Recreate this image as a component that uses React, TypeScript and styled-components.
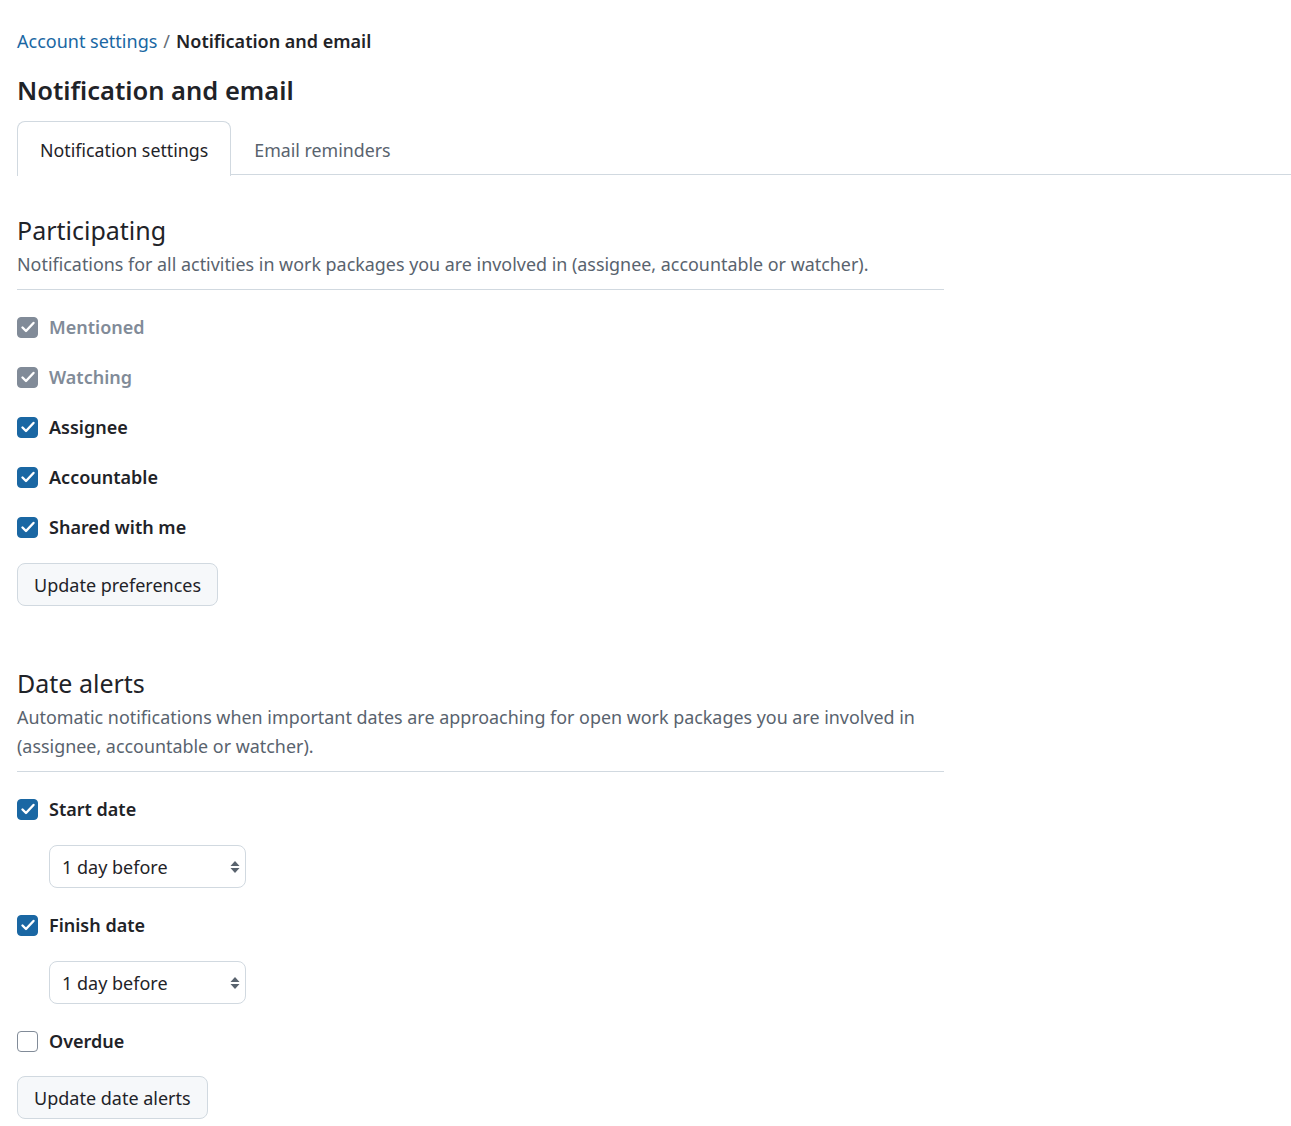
import React from "react";
import styled, { createGlobalStyle } from "styled-components";

const Global = createGlobalStyle`
  html, body { margin: 0; padding: 0; background: #ffffff; }
  body { font-family: "Noto Sans", "Open Sans", sans-serif; color: #1f2328; }
  * { box-sizing: border-box; }
`;

const Page = styled.div`
  padding: 26px 0 6px 17px;
`;

const Breadcrumb = styled.nav`
  display: flex;
  align-items: center;
  gap: 6px;
  font-size: 18px;
  line-height: 30px;
`;

const Crumb = styled.a`
  color: #1a67a3;
  text-decoration: none;
`;

const Sep = styled.span`
  color: #656d76;
`;

const Current = styled.span`
  font-weight: 600;
  color: #1f2328;
`;

const Title = styled.h1`
  margin: 17px 0 14px;
  font-size: 25.5px;
  font-weight: 600;
  line-height: 34px;
`;

const TabBar = styled.div`
  display: flex;
  border-bottom: 1px solid #d1d9e0;
  height: 54px;
`;

const Tab = styled.div<{ $active?: boolean }>`
  display: flex;
  align-items: center;
  padding: 2px 22px 0 22px;
  font-size: 17.8px;
  color: ${(p) => (p.$active ? "#1f2328" : "#59636e")};
  border: 1px solid ${(p) => (p.$active ? "#d1d9e0" : "transparent")};
  border-bottom: none;
  border-radius: 8px 8px 0 0;
  background: ${(p) => (p.$active ? "#fff" : "transparent")};
  margin-bottom: ${(p) => (p.$active ? "-1px" : "0")};
  height: ${(p) => (p.$active ? "55px" : "54px")};
`;

const Section = styled.section<{ $top: number }>`
  max-width: 927px;
  margin-top: ${(p) => p.$top}px;
`;

const SectionHeader = styled.div`
  border-bottom: 1px solid #d1d9e0;
  padding-bottom: 10px;
`;

const SectionTitle = styled.h2`
  margin: 0;
  font-size: 25px;
  font-weight: 400;
  line-height: 38px;
`;

const Description = styled.p`
  margin: 1px 0 0;
  font-size: 17.9px;
  line-height: 29px;
  color: #59636e;
`;

const Options = styled.div`
  display: flex;
  flex-direction: column;
  padding-top: 22px;
`;

const CheckRow = styled.label<{ $disabled?: boolean }>`
  display: flex;
  align-items: center;
  gap: 11px;
  height: 30px;
  margin-bottom: 20px;
  font-size: 18px;
  font-weight: 600;
  color: ${(p) => (p.$disabled ? "#818b98" : "#1f2328")};
`;

const Box = styled.span<{ $checked: boolean; $disabled?: boolean }>`
  width: 21px;
  height: 21px;
  border-radius: 4px;
  display: inline-flex;
  align-items: center;
  justify-content: center;
  flex: none;
  background: ${(p) =>
    !p.$checked ? "#fff" : p.$disabled ? "#818b98" : "#1a67a3"};
  border: 1.5px solid
    ${(p) => (!p.$checked ? "#818b98" : p.$disabled ? "#818b98" : "#1a67a3")};
`;

const SelectWrap = styled.div`
  padding-left: 32px;
  margin: 1px 0 22px;
`;

const Select = styled.div`
  width: 197px;
  height: 43px;
  border: 1px solid #d1d9e0;
  border-radius: 8px;
  display: flex;
  align-items: center;
  justify-content: space-between;
  padding: 0 4px 0 12px;
  font-size: 18px;
  color: #1f2328;
  background: #fff;
`;

const Button = styled.button<{ $offset?: number }>`
  align-self: flex-start;
  height: 43px;
  padding: 0 16px;
  border: 1px solid #d1d9e0;
  border-radius: 8px;
  background: #f6f8fa;
  font-family: inherit;
  font-size: 18px;
  color: #1f2328;
  margin-top: ${(p) => p.$offset ?? 0}px;
`;

const Check = () => (
  <svg width="16" height="16" viewBox="0 0 16 16" fill="none">
    <path d="M2.5 8.5l3.5 3.5 7.5-8" stroke="#fff" strokeWidth="2.4" strokeLinecap="round" strokeLinejoin="round" />
  </svg>
);

const Arrows = () => (
  <svg width="12" height="16" viewBox="0 0 12 16">
    <path d="M6 2l4.5 5h-9z" fill="#59636e" />
    <path d="M6 14l4.5-5h-9z" fill="#59636e" />
  </svg>
);

const Checkbox = ({ label, checked, disabled }: { label: string; checked: boolean; disabled?: boolean }) => (
  <CheckRow $disabled={disabled}>
    <Box $checked={checked} $disabled={disabled}>{checked && <Check />}</Box>
    {label}
  </CheckRow>
);

const SelectBox = () => (
  <SelectWrap>
    <Select>
      <span>1 day before</span>
      <Arrows />
    </Select>
  </SelectWrap>
);

export default function App() {
  return (
    <>
      <Global />
      <Page>
        <Breadcrumb>
          <Crumb href="#">Account settings</Crumb>
          <Sep>/</Sep>
          <Current>Notification and email</Current>
        </Breadcrumb>
        <Title>Notification and email</Title>
        <TabBar>
          <Tab $active>Notification settings</Tab>
          <Tab>Email reminders</Tab>
        </TabBar>

        <Section $top={36}>
          <SectionHeader>
            <SectionTitle>Participating</SectionTitle>
            <Description>
              Notifications for all activities in work packages you are involved in (assignee, accountable or watcher).
            </Description>
          </SectionHeader>
          <Options>
            <Checkbox label="Mentioned" checked disabled />
            <Checkbox label="Watching" checked disabled />
            <Checkbox label="Assignee" checked />
            <Checkbox label="Accountable" checked />
            <Checkbox label="Shared with me" checked />
            <Button $offset={1}>Update preferences</Button>
          </Options>
        </Section>

        <Section $top={58}>
          <SectionHeader>
            <SectionTitle>Date alerts</SectionTitle>
            <Description>
              Automatic notifications when important dates are approaching for open work packages you are involved in (assignee, accountable or watcher).
            </Description>
          </SectionHeader>
          <Options>
            <Checkbox label="Start date" checked />
            <SelectBox />
            <Checkbox label="Finish date" checked />
            <SelectBox />
            <Checkbox label="Overdue" checked={false} />
            <Button>Update date alerts</Button>
          </Options>
        </Section>
      </Page>
    </>
  );
}
